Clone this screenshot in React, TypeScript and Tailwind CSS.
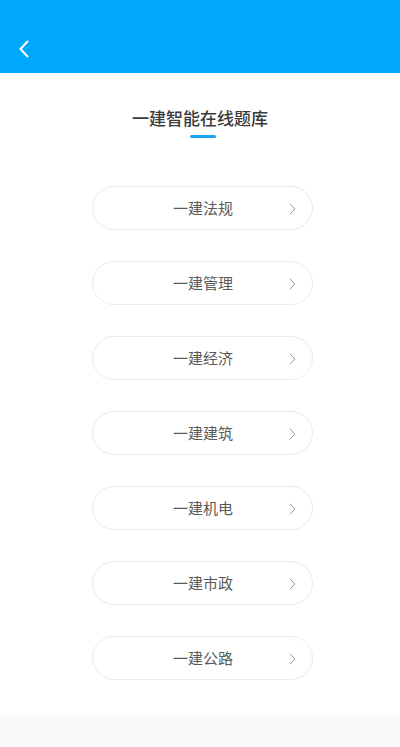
import React from 'react'

const subjects = ['一建法规', '一建管理', '一建经济', '一建建筑', '一建机电', '一建市政', '一建公路']

const Chevron = ({ className }: { className?: string }) => (
  <svg className={className} viewBox="0 0 10 18" fill="none" stroke="currentColor" strokeLinecap="round" strokeLinejoin="round">
    <path d="M8.5 1.5 1.5 9l7 7.5" />
  </svg>
)

const App = () => {
  return (
    <div className="w-[400px] h-[747px] bg-[#fafafa] flex flex-col" style={{ fontFamily: '"Noto Sans CJK SC", "Noto Sans", sans-serif' }}>
      <div className="h-[73px] bg-[#00a8fd] flex items-end pb-[15px] pl-[18px] shrink-0">
        <Chevron className="w-[12px] h-[18px] text-white [stroke-width:2]" />
      </div>
      <div className="bg-white h-[642px] flex flex-col items-center">
        <h1 className="mt-[33px] text-[17px] leading-[23px] text-[#3a3a3a] font-medium">一建智能在线题库</h1>
        <div className="mt-[6px] ml-[6px] w-[26px] h-[3px] rounded-full bg-[#1aa3f5]" />
        <div className="mt-[48px] flex flex-col gap-[31px] ml-[4px]">
          {subjects.map((s) => (
            <div key={s} className="relative w-[221px] h-[44px] rounded-full border border-[#ebebeb] flex items-center justify-center">
              <span className="ml-[2px] text-[15px] text-[#5a5a5a]">{s}</span>
              <Chevron className="absolute right-[16px] top-[16px] w-[7px] h-[12px] text-[#999] rotate-180 [stroke-width:1.5]" />
            </div>
          ))}
        </div>
      </div>
    </div>
  )
}

export default App
